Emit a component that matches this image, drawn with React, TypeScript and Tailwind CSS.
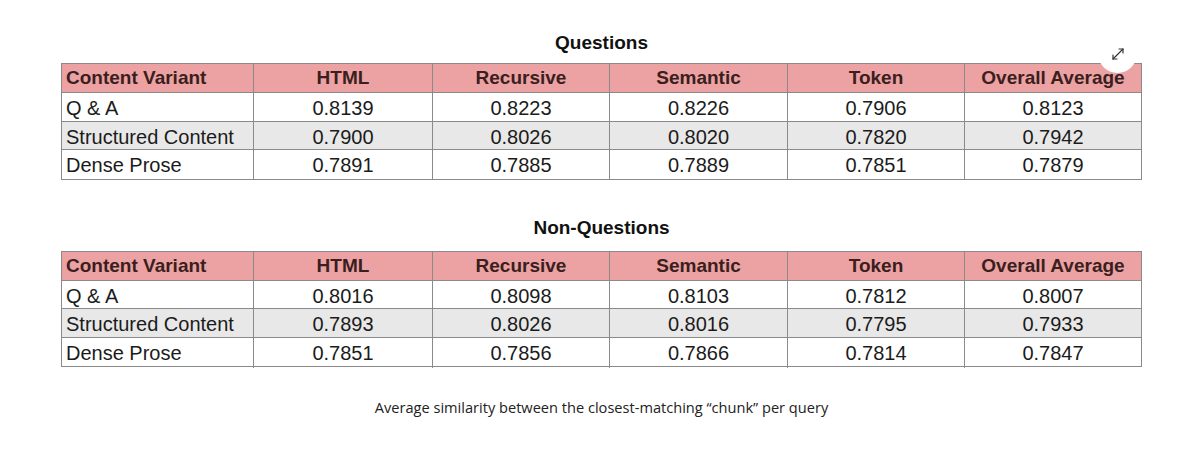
import React from "react";

type Row = [string, string, string, string, string, string];

const headers: Row = ["Content Variant", "HTML", "Recursive", "Semantic", "Token", "Overall Average"];

const q: Row[] = [
  ["Q & A", "0.8139", "0.8223", "0.8226", "0.7906", "0.8123"],
  ["Structured Content", "0.7900", "0.8026", "0.8020", "0.7820", "0.7942"],
  ["Dense Prose", "0.7891", "0.7885", "0.7889", "0.7851", "0.7879"],
];
const nq: Row[] = [
  ["Q & A", "0.8016", "0.8098", "0.8103", "0.7812", "0.8007"],
  ["Structured Content", "0.7893", "0.8026", "0.8016", "0.7795", "0.7933"],
  ["Dense Prose", "0.7851", "0.7856", "0.7866", "0.7814", "0.7847"],
];

function Table({ rows }: { rows: Row[] }) {
  const grid = "grid grid-cols-[191px_179px_177px_178px_177px_177px]";
  return (
    <div className="w-[1081px] border border-[#8a8a8a] text-[20px] text-[#1b1b1b]">
      <div className={`${grid} h-[29px] bg-[#eca2a2] font-bold text-[19px] text-[#3b1e1e] border-b border-[#8a8a8a]`}>
        {headers.map((h, i) => (
          <div
            key={i}
            className={`flex items-center ${i === 0 ? "pl-[4px]" : "justify-center border-l border-[#8a8a8a]"}`}
          >
            {h}
          </div>
        ))}
      </div>
      {rows.map((r, ri) => (
        <div
          key={ri}
          className={`${grid} h-[28.5px] ${ri === 1 ? "bg-[#e8e8e8]" : "bg-white"} ${ri < rows.length - 1 ? "border-b border-[#8a8a8a]" : ""}`}
        >
          {r.map((c, i) => (
            <div
              key={i}
              className={`flex items-center ${i === 0 ? "pl-[4px]" : "justify-center border-l border-[#8a8a8a]"}`}
            >
              {c}
            </div>
          ))}
        </div>
      ))}
    </div>
  );
}

export default function App() {
  return (
    <div
      className="w-[1199px] h-[455px] bg-white flex flex-col items-center relative pl-[4px]"
      style={{ fontFamily: '"Liberation Sans", Arial, sans-serif' }}
    >
      <div className="h-[63px] flex items-end pb-[6px] text-[19px] font-bold text-[#111]">Questions</div>
      <Table rows={q} />
      <div className="h-[71px] flex items-end pb-[8px] text-[19px] font-bold text-[#111]">Non-Questions</div>
      <Table rows={nq} />
      <div
        className="mt-[30px] text-[14.6px] text-[#222]"
        style={{ fontFamily: '"Open Sans", sans-serif' }}
      >
        Average similarity between the closest-matching “chunk” per query
      </div>
      <div className="absolute left-[1098px] top-[34px] w-[39px] h-[39px] rounded-full bg-white flex items-center justify-center">
        <svg width="14" height="14" viewBox="0 0 14 14" fill="none" stroke="#333" strokeWidth="1.2" strokeLinecap="round" strokeLinejoin="round">
          <path d="M2 12 L12 2" />
          <path d="M8 2 H12 V6" />
          <path d="M2 8 V12 H6" />
        </svg>
      </div>
    </div>
  );
}
